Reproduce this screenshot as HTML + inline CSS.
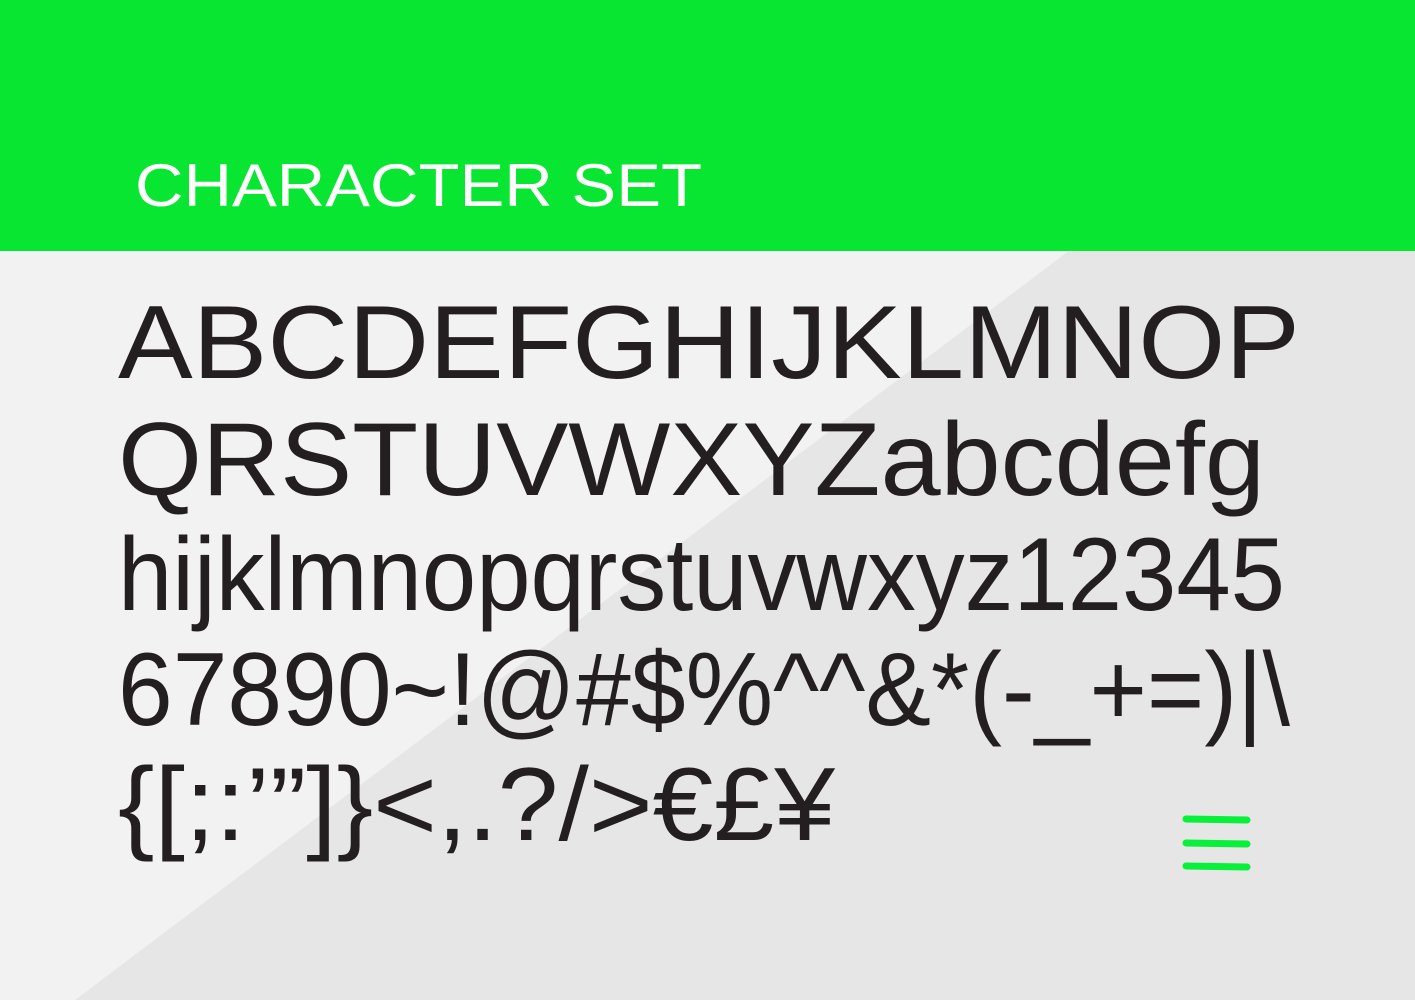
<!DOCTYPE html>
<html><head><meta charset="utf-8"><style>
html,body{margin:0;padding:0;width:1415px;height:1000px;overflow:hidden;background:#f1f1f1}
svg{display:block}
</style></head><body>
<svg width="1415" height="1000" viewBox="0 0 1415 1000" xmlns="http://www.w3.org/2000/svg">
<rect x="0" y="250" width="1415" height="750" fill="#f2f2f2"/>
<polygon points="1070,250 1415,250 1415,1000 75,1000" fill="#e6e6e6"/>
<rect x="0" y="0" width="1415" height="251" fill="#08e632"/>
<g font-family="Liberation Sans, sans-serif" fill="#231f20">
<text x="135" y="206" font-size="60" fill="#ffffff" textLength="567" lengthAdjust="spacingAndGlyphs">CHARACTER SET</text>
<text x="118" y="378" font-size="104" textLength="1182" lengthAdjust="spacingAndGlyphs">ABCDEFGHIJKLMNOP</text>
<text x="118" y="495" font-size="104" textLength="1147" lengthAdjust="spacingAndGlyphs">QRSTUVWXYZabcdefg</text>
<text x="118" y="610" font-size="104" textLength="1167" lengthAdjust="spacingAndGlyphs">hijklmnopqrstuvwxyz12345</text>
<text x="118" y="725" font-size="104" textLength="1172" lengthAdjust="spacingAndGlyphs">67890~!@#$%^^&amp;*(-_+=)|\</text>
<text x="118" y="840" font-size="104" textLength="717" lengthAdjust="spacingAndGlyphs">{[;:’”]}&lt;,.?/&gt;€£¥</text>
</g>
<g stroke="#08f03a" stroke-width="7" stroke-linecap="round">
<line x1="1186" y1="819" x2="1247" y2="820"/>
<line x1="1186" y1="843" x2="1247" y2="844"/>
<line x1="1186" y1="866" x2="1247" y2="867"/>
</g>
</svg>
</body></html>
